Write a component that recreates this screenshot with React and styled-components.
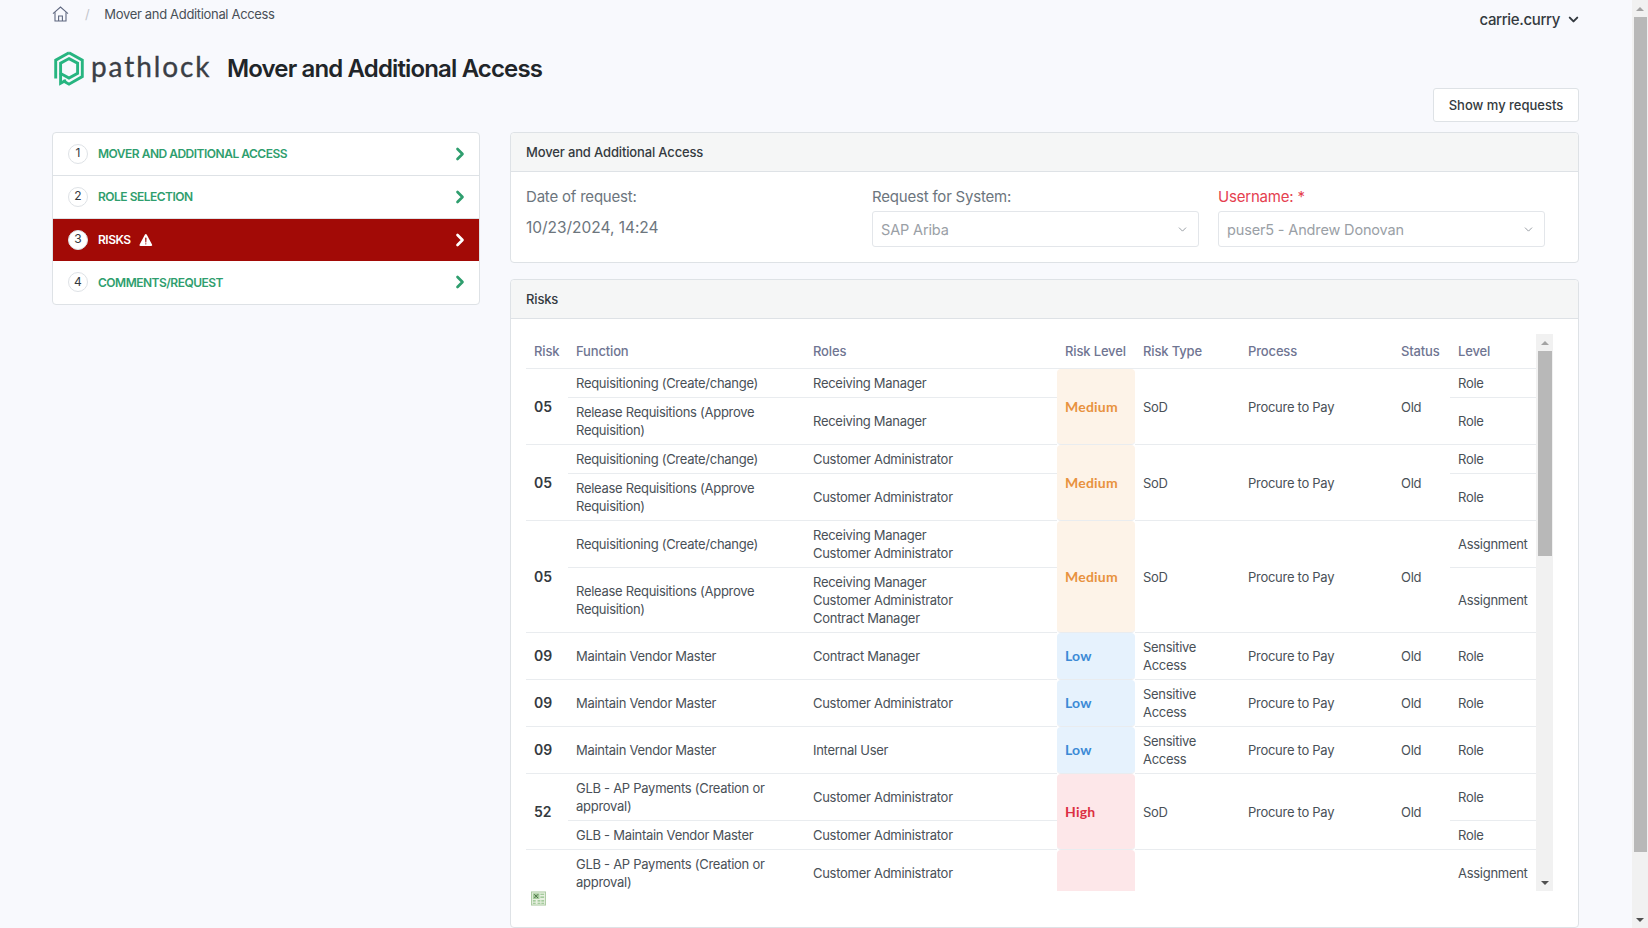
import React from 'react'
import styled, { createGlobalStyle } from 'styled-components'
import { FiChevronRight, FiChevronDown } from 'react-icons/fi'
import { IoWarning } from 'react-icons/io5'

const GlobalStyle = createGlobalStyle`
  html, body {
    margin: 0;
    height: 100%;
    overflow: hidden;
  }
  body {
    background: #f8f9fd;
    font-family: Inter, "Liberation Sans", sans-serif;
    color: #495057;
  }
  * {
    box-sizing: border-box;
  }
`

const Page = styled.div`
  display: flex;
  height: 928px;
`
const Main = styled.div`
  flex: 1;
  min-width: 0;
  height: 928px;
  overflow: hidden;
  padding: 0 53px 0 52px;
`
const ScrollTrack = styled.div`
  flex: none;
  display: flex;
  flex-direction: column;
  align-items: center;
  width: ${p => p.$width}px;
  height: ${p => p.$height}px;
  background: #f1f1f1;
`
const ScrollThumb = styled.div`
  flex: none;
  width: ${p => p.$width}px;
  height: ${p => p.$height}px;
  margin-left: ${p => p.$shift}px;
  background: #b8b8b8;
`
const ScrollSpace = styled.div`
  flex: 1;
`
const ArrowButton = styled.div`
  flex: none;
  height: 17px;
  width: 100%;
  display: flex;
  align-items: center;
  justify-content: center;
  &::before {
    content: '';
    border-left: 4px solid transparent;
    border-right: 4px solid transparent;
    ${p => p.$down
      ? 'border-top: 4px solid #505050;'
      : `border-bottom: 4px solid ${p.$light ? '#a3a3a3' : '#505050'};`}
  }
`
const TopBar = styled.div`
  display: flex;
  justify-content: space-between;
  height: 28px;
`
const Breadcrumb = styled.nav`
  display: flex;
  align-items: center;
  font-size: 13px;
  letter-spacing: -0.33px;
  color: #495057;
`
const Slash = styled.span`
  margin: 0 15px 0 16px;
  color: #c3c6cc;
`
const UserMenu = styled.div`
  display: flex;
  align-items: center;
  gap: 6px;
  margin: 10px -2px 0 0;
  height: 18px;
  font-size: 15px;
  font-weight: 500;
  letter-spacing: -0.35px;
  color: #343a40;
  svg {
    stroke-width: 3.2;
  }
`
const TitleRow = styled.div`
  display: flex;
  align-items: center;
  height: 34px;
  margin-top: 23px;
`
const Logo = styled.div`
  display: flex;
  align-items: center;
  gap: 7px;
  margin-left: 2px;
  width: 173px;
`
const LogoWord = styled.span`
  font-family: Lato, sans-serif;
  font-size: 28px;
  line-height: 34px;
  margin-top: -5px;
  letter-spacing: 1.9px;
  color: #3b3f46;
  -webkit-text-stroke: 0.35px #3b3f46;
`
const Title = styled.h1`
  margin: 0;
  font-size: 24px;
  font-weight: 600;
  letter-spacing: -0.86px;
  color: #212529;
`
const Content = styled.div`
  display: grid;
  grid-template-columns: 428px 1fr;
  column-gap: 30px;
  margin-top: 3px;
`
const Steps = styled.div`
  margin-top: 44px;
  height: 173px;
  display: flex;
  flex-direction: column;
  background: #fff;
  border: 1px solid #dee2e6;
  border-radius: 4px;
  overflow: hidden;
`
const Step = styled.div`
  flex: none;
  height: ${p => (p.$active ? 42 : 43)}px;
  display: flex;
  align-items: center;
  padding: 0 9px 1px 15px;
  background: ${p => (p.$active ? '#a20a06' : 'transparent')};
  color: ${p => (p.$active ? '#fff' : '#2f9e6e')};
  border-bottom: ${p => (p.$last || p.$active ? 'none' : '1px solid #dee2e6')};
`
const StepNumber = styled.span`
  width: 20px;
  height: 20px;
  border-radius: 50%;
  display: flex;
  align-items: center;
  justify-content: center;
  padding-bottom: 2px;
  border: 1px solid #dee2e6;
  background: #fff;
  color: #343a40;
  font-size: 12px;
  margin-right: 10px;
`
const StepLabel = styled.span`
  flex: 1;
  display: flex;
  align-items: center;
  gap: 7px;
  font-size: 12px;
  font-weight: 600;
  letter-spacing: -0.5px;
`
const StepChevron = styled(FiChevronRight)`
  width: 20px;
  height: 20px;
  stroke-width: 3.2;
`
const Right = styled.div`
  min-width: 0;
  display: flex;
  flex-direction: column;
`
const RequestsButton = styled.button`
  align-self: flex-end;
  width: 146px;
  height: 34px;
  margin-bottom: 10px;
  padding: 0;
  background: #fff;
  border: 1px solid #dee2e6;
  border-radius: 3px;
  font-family: inherit;
  font-size: 13px;
  font-weight: 500;
  color: #343a40;
`
const Panel = styled.section`
  background: #fff;
  border: 1px solid #dee2e6;
  border-radius: 4px;
  margin-bottom: 16px;
`
const PanelHeader = styled.div`
  height: 39px;
  display: flex;
  align-items: center;
  padding: 0 15px;
  background: #f5f6f6;
  border-bottom: 1px solid #dee2e6;
  border-radius: 4px 4px 0 0;
  font-size: 13px;
  font-weight: 500;
  letter-spacing: -0.15px;
  color: #343a40;
`
const RequestForm = styled.div`
  display: grid;
  grid-template-columns: 346px 346px 327px;
  height: 90px;
  padding: 15px 15px 0;
`
const Field = styled.div`
  display: flex;
  flex-direction: column;
`
const FieldLabel = styled.label`
  font-size: 15px;
  line-height: 20px;
  letter-spacing: -0.2px;
  color: ${p => (p.$error ? '#e5404f' : '#6c757d')};
  margin-bottom: ${p => (p.$plain ? 11 : 4)}px;
`
const FieldValue = styled.div`
  font-size: 15.5px;
  line-height: 20px;
  letter-spacing: -0.03px;
  color: #6c757d;
`
const Select = styled.div`
  width: 327px;
  height: 36px;
  display: flex;
  align-items: center;
  justify-content: space-between;
  padding: 0 9px 0 8px;
  border: 1px solid #e3e6ea;
  border-radius: 3px;
  font-size: 14.5px;
  letter-spacing: -0.15px;
  color: #9aa0a6;
  svg {
    color: #8a9097;
    stroke-width: 1.6;
  }
`
const RiskBody = styled.div`
  height: 608px;
  padding: 15px 0 0 15px;
`
const TableRow = styled.div`
  display: flex;
`
const TableWrap = styled.div`
  width: 1010px;
  height: 557px;
  overflow: hidden;
`
const Table = styled.table`
  width: 1010px;
  table-layout: fixed;
  border-collapse: separate;
  border-spacing: 0;
  font-size: 13px;
  line-height: 18px;
  letter-spacing: -0.28px;
  color: #495057;
`
const Th = styled.th`
  height: 35px;
  padding: 0 0 0 8px;
  text-align: left;
  font-weight: 500;
  letter-spacing: -0.15px;
  color: #6f7592;
  white-space: nowrap;
  border-bottom: 1px solid #e9ecef;
`
const Td = styled.td`
  padding: 5px 0 5px 8px;
  border-bottom: 1px solid #e9ecef;
  vertical-align: middle;
`
const RiskId = styled(Td)`
  font-size: 14px;
  font-weight: 600;
  letter-spacing: 0;
  color: #343a40;
`
const levelColors = {
  Medium: { bg: '#fdf3e8', fg: '#e8923f' },
  Low: { bg: '#e6f2fd', fg: '#3c8ad6' },
  High: { bg: '#fde7e9', fg: '#dc2f43' },
}
const LevelCell = styled(Td)`
  background: ${p => levelColors[p.$level].bg};
  background-clip: padding-box;
  border-radius: 4px;
  color: ${p => levelColors[p.$level].fg};
  font-family: Lato, sans-serif;
  font-size: 14px;
  font-weight: 700;
  letter-spacing: 0.2px;
`
const ExcelIcon = styled.svg`
  display: block;
  margin: 0 0 0 5px;
`

const steps = [
  { label: 'MOVER AND ADDITIONAL ACCESS' },
  { label: 'ROLE SELECTION' },
  { label: 'RISKS', active: true },
  { label: 'COMMENTS/REQUEST' },
]

const fn1 = 'Requisitioning (Create/change)'
const fn2 = <>Release Requisitions (Approve<br />Requisition)</>
const vendor = 'Maintain Vendor Master'
const procure = 'Procure to Pay'
const sensitive = <>Sensitive<br />Access</>
const glb = <>GLB - AP Payments (Creation or<br />approval)</>

const groups = [
  {
    risk: '05', level: 'Medium', type: 'SoD',
    rows: [
      { fn: fn1, role: 'Receiving Manager', lvl: 'Role' },
      { fn: fn2, role: 'Receiving Manager', lvl: 'Role' },
    ],
  },
  {
    risk: '05', level: 'Medium', type: 'SoD',
    rows: [
      { fn: fn1, role: 'Customer Administrator', lvl: 'Role' },
      { fn: fn2, role: 'Customer Administrator', lvl: 'Role' },
    ],
  },
  {
    risk: '05', level: 'Medium', type: 'SoD',
    rows: [
      { fn: fn1, role: <>Receiving Manager<br />Customer Administrator</>, lvl: 'Assignment' },
      { fn: fn2, role: <>Receiving Manager<br />Customer Administrator<br />Contract Manager</>, lvl: 'Assignment' },
    ],
  },
  { risk: '09', level: 'Low', type: sensitive, rows: [{ fn: vendor, role: 'Contract Manager', lvl: 'Role' }] },
  { risk: '09', level: 'Low', type: sensitive, rows: [{ fn: vendor, role: 'Customer Administrator', lvl: 'Role' }] },
  { risk: '09', level: 'Low', type: sensitive, rows: [{ fn: vendor, role: 'Internal User', lvl: 'Role' }] },
  {
    risk: '52', level: 'High', type: 'SoD',
    rows: [
      { fn: glb, role: 'Customer Administrator', lvl: 'Role' },
      { fn: 'GLB - Maintain Vendor Master', role: 'Customer Administrator', lvl: 'Role' },
    ],
  },
]

const HomeIcon = () => (
  <svg width="17" height="16" viewBox="0 0 17 16" fill="none" stroke="#5f6880" strokeWidth="1.1">
    <path d="M1 7.6 8.5 1 16 7.6" />
    <path d="M3 6.2V15h11V6.2" />
    <path d="M6.6 15v-5h3.8v5" />
  </svg>
)

const LogoMark = () => (
  <svg width="30" height="35" viewBox="0 0 30 35" fill="none" stroke="#27b580" strokeWidth="2.9">
    <path d="M15 1.7 28.3 9.2V25.6L15 33.2 9 29.8" />
    <path d="M1.7 27.6V9.2L15 1.7" />
    <path d="M15 7.6 23.6 12.2V22.4L15 27 6.6 22.4V12.2Z" />
    <path d="M6.6 22.4V32.2L12 29.2" />
  </svg>
)

const App = () => (
  <>
    <GlobalStyle />
    <Page>
      <Main>
        <TopBar>
          <Breadcrumb>
            <HomeIcon />
            <Slash>/</Slash>
            Mover and Additional Access
          </Breadcrumb>
          <UserMenu>
            carrie.curry
            <FiChevronDown size={15} />
          </UserMenu>
        </TopBar>
        <TitleRow>
          <Logo>
            <LogoMark />
            <LogoWord>pathlock</LogoWord>
          </Logo>
          <Title>Mover and Additional Access</Title>
        </TitleRow>
        <Content>
          <Steps>
            {steps.map((s, i) => (
              <Step key={s.label} $active={s.active} $last={i === steps.length - 1}>
                <StepNumber>{i + 1}</StepNumber>
                <StepLabel>
                  {s.label}
                  {s.active && <IoWarning size={16} />}
                </StepLabel>
                <StepChevron />
              </Step>
            ))}
          </Steps>
          <Right>
            <RequestsButton>Show my requests</RequestsButton>
            <Panel>
              <PanelHeader>Mover and Additional Access</PanelHeader>
              <RequestForm>
                <Field>
                  <FieldLabel $plain>Date of request:</FieldLabel>
                  <FieldValue>10/23/2024, 14:24</FieldValue>
                </Field>
                <Field>
                  <FieldLabel>Request for System:</FieldLabel>
                  <Select>SAP Ariba<FiChevronDown size={13} /></Select>
                </Field>
                <Field>
                  <FieldLabel $error>Username: *</FieldLabel>
                  <Select>puser5 - Andrew Donovan<FiChevronDown size={13} /></Select>
                </Field>
              </RequestForm>
            </Panel>
            <Panel>
              <PanelHeader>Risks</PanelHeader>
              <RiskBody>
                <TableRow>
                  <TableWrap>
                    <Table>
                      <colgroup>
                        <col width="42" /><col width="237" /><col width="252" /><col width="78" />
                        <col width="105" /><col width="153" /><col width="57" /><col width="86" />
                      </colgroup>
                      <thead>
                        <tr>
                          {['Risk', 'Function', 'Roles', 'Risk Level', 'Risk Type', 'Process', 'Status', 'Level'].map(h => (
                            <Th key={h}>{h}</Th>
                          ))}
                        </tr>
                      </thead>
                      <tbody>
                        {groups.map((g, gi) =>
                          g.rows.map((r, ri) => (
                            <tr key={`${gi}-${ri}`}>
                              {ri === 0 && <RiskId rowSpan={g.rows.length}>{g.risk}</RiskId>}
                              <Td>{r.fn}</Td>
                              <Td>{r.role}</Td>
                              {ri === 0 && <LevelCell rowSpan={g.rows.length} $level={g.level}>{g.level}</LevelCell>}
                              {ri === 0 && <Td rowSpan={g.rows.length}>{g.type}</Td>}
                              {ri === 0 && <Td rowSpan={g.rows.length}>{procure}</Td>}
                              {ri === 0 && <Td rowSpan={g.rows.length}>Old</Td>}
                              <Td>{r.lvl}</Td>
                            </tr>
                          ))
                        )}
                        <tr>
                          <Td />
                          <Td>{glb}</Td>
                          <Td>Customer Administrator</Td>
                          <LevelCell $level="High" />
                          <Td />
                          <Td />
                          <Td />
                          <Td>Assignment</Td>
                        </tr>
                      </tbody>
                    </Table>
                  </TableWrap>
                  <ScrollTrack $width={17} $height={557}>
                    <ArrowButton $light />
                    <ScrollThumb $width={14} $height={205} $shift={0} />
                    <ScrollSpace />
                    <ArrowButton $down />
                  </ScrollTrack>
                </TableRow>
                <ExcelIcon width="15" height="15" viewBox="0 0 16 15">
                  <rect x="0.5" y="0.5" width="15" height="14" fill="#e7f0e0" stroke="#a9c9a0" />
                  <rect x="2" y="2" width="7" height="6" fill="#a5cc9b" />
                  <path d="M3.5 3 7.5 7M7.5 3 3.5 7" stroke="#4b6b45" strokeWidth="1" />
                  <path d="M10 3h4M10 6h4M2 10h3M7 10h3M11 10h3M2 12.5h3M7 12.5h3M11 12.5h3" stroke="#8fbf86" strokeWidth="1.2" />
                </ExcelIcon>
              </RiskBody>
            </Panel>
          </Right>
        </Content>
      </Main>
      <ScrollTrack $width={16} $height={928}>
        <ArrowButton $light />
        <ScrollThumb $width={13} $height={835} $shift={1} />
        <ScrollSpace />
        <ArrowButton $down />
      </ScrollTrack>
    </Page>
  </>
)

export default App
